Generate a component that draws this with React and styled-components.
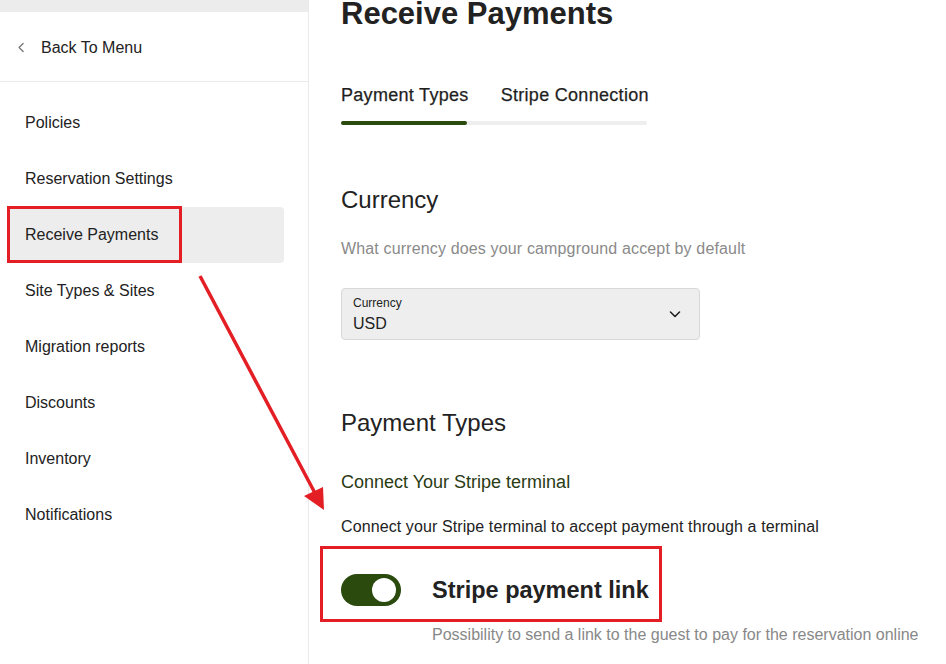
import React from "react";
import styled, { createGlobalStyle } from "styled-components";

const GlobalStyle = createGlobalStyle`
  html, body { margin: 0; padding: 0; background: #fff; }
  body { font-family: "Liberation Sans", Arial, sans-serif; color: #222; }
  * { box-sizing: border-box; }
`;

const Page = styled.div`
  position: relative;
  display: flex;
  width: 946px;
  height: 664px;
  overflow: hidden;
  background: #fff;
`;

const Sidebar = styled.aside`
  width: 309px;
  flex: none;
  border-right: 1px solid #ebebeb;
  display: flex;
  flex-direction: column;
`;

const TopStrip = styled.div`
  height: 12px;
  background: #ececec;
`;

const BackRow = styled.div`
  height: 70px;
  display: flex;
  align-items: center;
  gap: 13px;
  padding: 2px 0 0 15px;
  border-bottom: 1px solid #ebebeb;
  font-size: 16px;
  color: #222;
`;

const Nav = styled.nav`
  display: flex;
  flex-direction: column;
  padding: 13px 24px 0 7px;
`;

const NavItem = styled.div`
  height: 56px;
  display: flex;
  align-items: center;
  padding-left: 18px;
  font-size: 16px;
  color: #222;
  border-radius: 4px;
  background: ${(p) => (p.$active ? "#ededed" : "transparent")};
`;

const Main = styled.main`
  flex: 1;
  padding-left: 32px;
  display: flex;
  flex-direction: column;
  align-items: flex-start;
`;

const Title = styled.h1`
  margin: -4px 0 0;
  font-size: 31px;
  line-height: 36px;
  font-weight: 700;
  color: #222;
`;

const Tabs = styled.div`
  margin-top: 52px;
  display: flex;
  flex-direction: column;
`;

const TabLabels = styled.div`
  display: flex;
  gap: 32px;
`;

const Tab = styled.div`
  font-size: 18px;
  line-height: 22px;
  letter-spacing: 0.3px;
  color: #1f1f1f;
  -webkit-text-stroke: 0.25px #1f1f1f;
`;

const TabTrack = styled.div`
  margin-top: 15px;
  height: 4px;
  width: 306px;
  border-radius: 2px;
  background: #eeeeee;
  display: flex;
`;

const TabIndicator = styled.div`
  width: 126px;
  height: 4px;
  border-radius: 2px;
  background: #2b4a0e;
`;

const SectionHeading = styled.h2`
  margin: ${(p) => p.$mt}px 0 0;
  font-size: 24px;
  line-height: 30px;
  font-weight: 400;
  color: #222;
`;

const Muted = styled.p`
  margin: ${(p) => p.$mt}px 0 0;
  font-size: 16px;
  line-height: 20px;
  letter-spacing: 0.15px;
  color: #8a8a8a;
`;

const SelectBox = styled.div`
  margin-top: 29px;
  width: 359px;
  height: 52px;
  background: #eeeeee;
  border: 1px solid #d8d8d8;
  border-radius: 4px;
  display: flex;
  align-items: center;
  justify-content: space-between;
  padding: 0 16px 0 11px;
`;

const SelectText = styled.div`
  display: flex;
  flex-direction: column;
`;

const SelectLabel = styled.span`
  font-size: 12px;
  line-height: 14px;
  color: #222;
`;

const SelectValue = styled.span`
  margin-top: 5px;
  font-size: 16px;
  line-height: 18px;
  color: #222;
`;

const GreenLink = styled.p`
  margin: 33px 0 0;
  font-size: 18px;
  line-height: 22px;
  color: #2a3b14;
`;

const Body = styled.p`
  margin: 24px 0 0;
  font-size: 16px;
  line-height: 20px;
  letter-spacing: 0.1px;
  color: #222;
`;

const ToggleRow = styled.div`
  margin-top: 37px;
  display: flex;
  align-items: center;
  gap: 31px;
`;

const Toggle = styled.div`
  width: 60px;
  height: 32px;
  border-radius: 16px;
  background: #2b4a0e;
  display: flex;
  align-items: center;
  justify-content: flex-end;
  padding-right: 5px;
`;

const Knob = styled.div`
  width: 24px;
  height: 24px;
  border-radius: 50%;
  background: #fff;
`;

const ToggleTitle = styled.span`
  font-size: 23.5px;
  font-weight: 700;
  color: #222;
`;

const Hint = styled(Muted)`
  margin-left: 91px;
  letter-spacing: 0;
  color: #888;
`;

const Highlight = styled.div`
  position: absolute;
  left: ${(p) => p.$x}px;
  top: ${(p) => p.$y}px;
  width: ${(p) => p.$w}px;
  height: ${(p) => p.$h}px;
  border: 3px solid #e31e24;
  pointer-events: none;
`;

const ArrowLayer = styled.svg`
  position: absolute;
  left: 0;
  top: 0;
  pointer-events: none;
`;

const Chevron = ({ size = 16, d }) => (
  <svg width={size} height={size} viewBox="0 0 16 16" fill="none">
    <path d={d} stroke="currentColor" strokeWidth="1.6" strokeLinecap="round" strokeLinejoin="round" />
  </svg>
);

const BackIcon = styled.span`
  display: flex;
  color: #777;
`;

const DownIcon = styled.span`
  display: flex;
  color: #222;
`;

const items = [
  "Policies",
  "Reservation Settings",
  "Receive Payments",
  "Site Types & Sites",
  "Migration reports",
  "Discounts",
  "Inventory",
  "Notifications",
];

export default function App() {
  return (
    <>
      <GlobalStyle />
      <Page>
        <Sidebar>
          <TopStrip />
          <BackRow>
            <BackIcon>
              <Chevron size={13} d="M10 3 L5 8 L10 13" />
            </BackIcon>
            Back To Menu
          </BackRow>
          <Nav>
            {items.map((t) => (
              <NavItem key={t} $active={t === "Receive Payments"}>
                {t}
              </NavItem>
            ))}
          </Nav>
        </Sidebar>
        <Main>
          <Title>Receive Payments</Title>
          <Tabs>
            <TabLabels>
              <Tab>Payment Types</Tab>
              <Tab>Stripe Connection</Tab>
            </TabLabels>
            <TabTrack>
              <TabIndicator />
            </TabTrack>
          </Tabs>
          <SectionHeading $mt={60}>Currency</SectionHeading>
          <Muted $mt={24}>What currency does your campground accept by default</Muted>
          <SelectBox>
            <SelectText>
              <SelectLabel>Currency</SelectLabel>
              <SelectValue>USD</SelectValue>
            </SelectText>
            <DownIcon>
              <Chevron size={16} d="M3.5 6 L8 10.5 L12.5 6" />
            </DownIcon>
          </SelectBox>
          <SectionHeading $mt={68}>Payment Types</SectionHeading>
          <GreenLink>Connect Your Stripe terminal</GreenLink>
          <Body>Connect your Stripe terminal to accept payment through a terminal</Body>
          <ToggleRow>
            <Toggle>
              <Knob />
            </Toggle>
            <ToggleTitle>Stripe payment link</ToggleTitle>
          </ToggleRow>
          <Hint $mt={19}>Possibility to send a link to the guest to pay for the reservation online</Hint>
        </Main>

        <Highlight $x={7} $y={206} $w={175} $h={57} />
        <Highlight $x={320} $y={546} $w={342} $h={76} />
        <ArrowLayer width="946" height="664" viewBox="0 0 946 664">
          <line x1="200" y1="276" x2="316" y2="495" stroke="#e31e24" strokeWidth="3.5" />
          <polygon points="324,510 304,496 323,487" fill="#e31e24" />
        </ArrowLayer>
      </Page>
    </>
  );
}
